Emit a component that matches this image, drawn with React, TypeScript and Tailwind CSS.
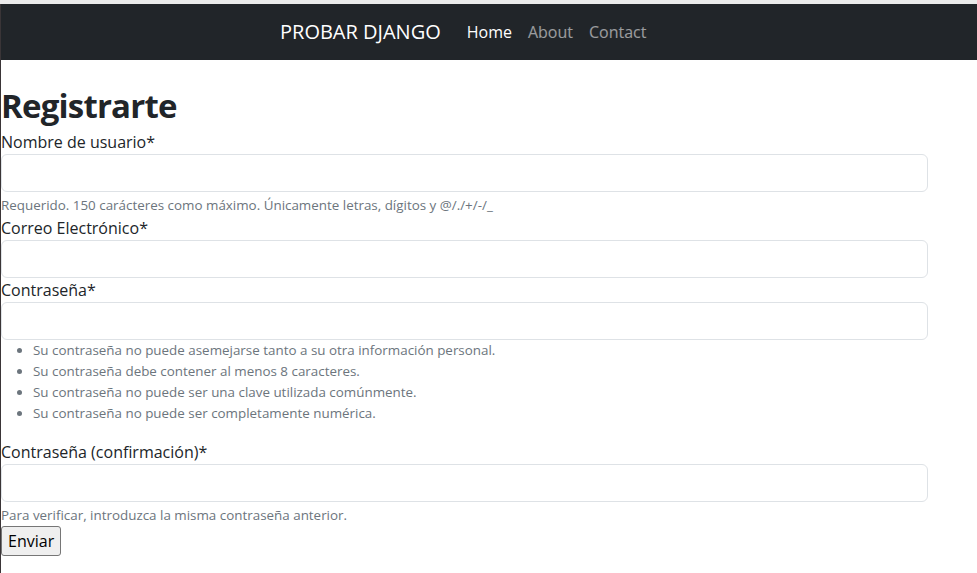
const hints = [
	'Su contraseña no puede asemejarse tanto a su otra información personal.',
	'Su contraseña debe contener al menos 8 caracteres.',
	'Su contraseña no puede ser una clave utilizada comúnmente.',
	'Su contraseña no puede ser completamente numérica.',
];

const Field = ({ label, type = 'text' }: { label: string; type?: string }) => (
	<>
		<label className="block leading-6">{label}</label>
		<input
			type={type}
			className="block w-[927px] h-[38px] rounded-[6px] border border-[#dee2e6] bg-white px-3 outline-none"
		/>
	</>
);

const Help: React.FC<{ children: React.ReactNode }> = ({ children }) => (
	<div className="mt-[3px] text-[13.4px] leading-[21px] text-[#6c757d]">{children}</div>
);

export default function App() {
	return (
		<div className="min-h-[573px] bg-white text-[#212529] font-['Open_Sans',sans-serif]">
			<div className="h-1 bg-[#ebebeb]" />
			<div className="border-l border-[#3a3537] min-h-[569px]">
				<nav className="flex h-14 items-center bg-[#212529] pl-[279px]">
					<a className="mr-[18px] text-xl leading-[30px] text-white">PROBAR DJANGO</a>
					<ul className="flex">
						<li><a className="block px-2 leading-6 text-white">Home</a></li>
						<li><a className="block px-2 leading-6 text-white/55">About</a></li>
						<li><a className="block px-2 leading-6 text-white/55">Contact</a></li>
					</ul>
				</nav>
				<main className="pt-6">
					<h1 className="text-[33px] font-bold tracking-[-0.8px] leading-[44px] mb-[2px]">Registrarte</h1>
					<form>
						<Field label="Nombre de usuario*" />
						<Help>Requerido. 150 carácteres como máximo. Únicamente letras, dígitos y @/./+/-/_</Help>
						<Field label="Correo Electrónico*" type="email" />
						<Field label="Contraseña*" type="password" />
						<ul className="mb-4 list-disc pl-8 text-[13.4px] leading-[21px] text-[#6c757d]">
							{hints.map((h) => (
								<li key={h}>{h}</li>
							))}
						</ul>
						<Field label="Contraseña (confirmación)*" type="password" />
						<Help>Para verificar, introduzca la misma contraseña anterior.</Help>
						<button
							type="submit"
							className="mt-0 rounded-[3px] border border-[#767676] bg-[#efefef] px-[6px] py-[2px] leading-6 text-black"
						>
							Enviar
						</button>
					</form>
				</main>
			</div>
		</div>
	);
}
